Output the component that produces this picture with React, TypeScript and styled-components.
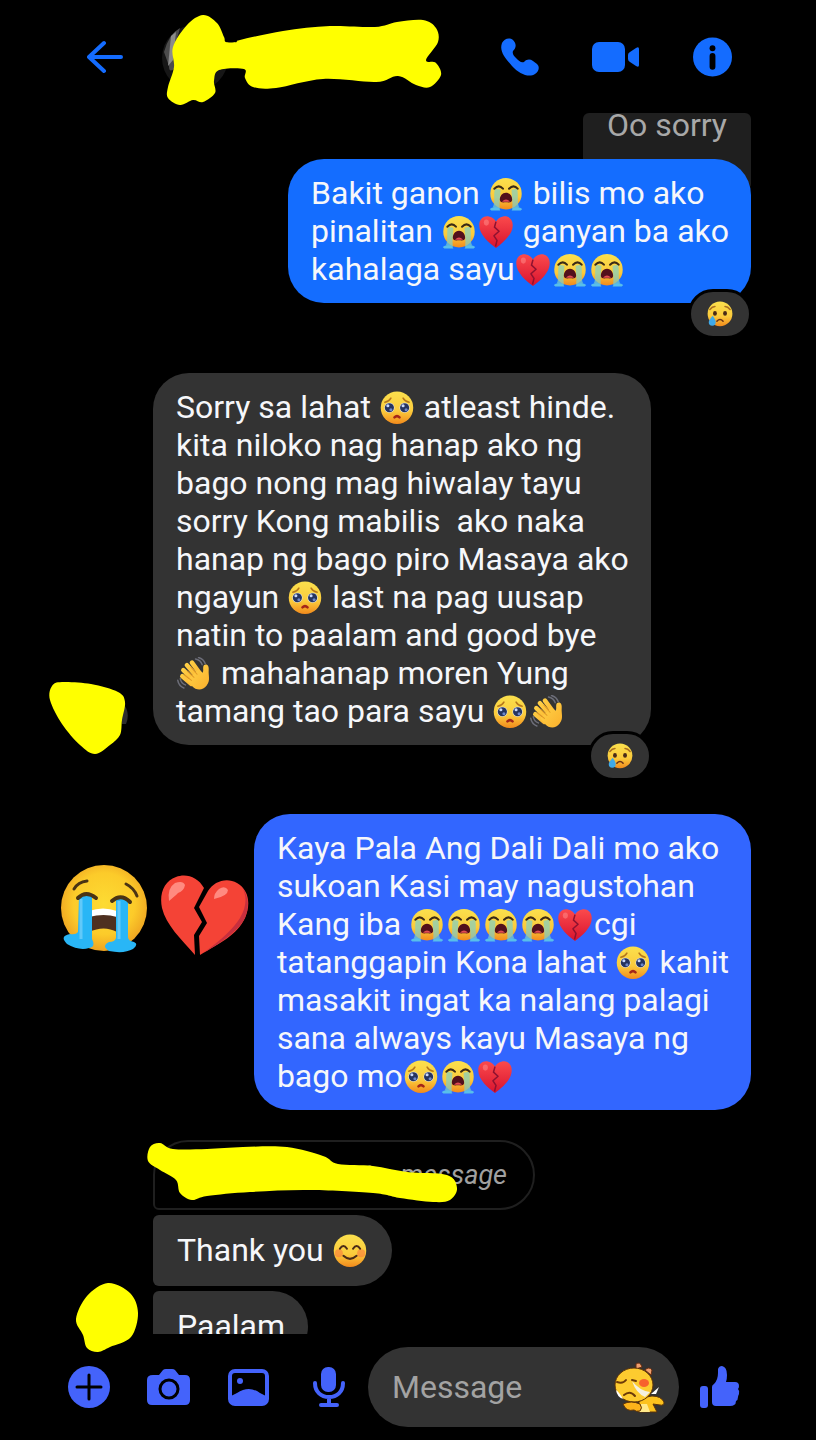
import React from "react";
import styled, { createGlobalStyle } from "styled-components";

const GlobalStyle = createGlobalStyle`
  * { box-sizing: border-box; }
  body { margin: 0; background: #000; font-family: Roboto, "Liberation Sans", sans-serif; }
  button { border: 0; padding: 0; background: none; color: inherit; cursor: pointer; }
  svg { display: block; }
`;

/* ---------- drawing helpers ---------- */

type Point = [number, number];

/** Closed, smooth outline through a list of points. */
function blob(points: Point[]): string {
  const n = points.length;
  let d = `M${points[0][0]} ${points[0][1]}`;
  for (let i = 0; i < n; i++) {
    const a = points[(i - 1 + n) % n];
    const b = points[i];
    const c = points[(i + 1) % n];
    const e = points[(i + 2) % n];
    d += `C${b[0] + (c[0] - a[0]) / 6} ${b[1] + (c[1] - a[1]) / 6} ${c[0] - (e[0] - b[0]) / 6} ${c[1] - (e[1] - b[1]) / 6} ${c[0]} ${c[1]}`;
  }
  return d + "Z";
}

const nameMarker: Point[] = [
  [203, 15], [217, 23], [224, 37], [226, 42], [237, 42], [240, 40], [283, 31], [330, 26], [375, 27],
  [397, 22], [423, 20], [436, 28], [438, 42], [426, 60], [436, 63], [441, 75], [430, 87], [416, 85],
  [398, 76], [376, 82], [323, 79], [276, 88], [253, 87], [245, 78], [244, 69], [219, 70], [214, 81],
  [215, 93], [203, 102], [193, 100], [180, 105], [168, 98], [168, 87], [174, 67], [173, 47], [187, 25],
];
const avatarMarker: Point[] = [
  [62, 682], [91, 684], [118, 692], [125, 702], [122, 720], [120, 735], [110, 745], [95, 754],
  [80, 745], [62, 724], [50, 700], [52, 686],
];
const lastAvatarMarker: Point[] = [
  [108, 1283], [130, 1293], [138, 1313], [131, 1337], [110, 1347], [98, 1352], [87, 1348],
  [83, 1335], [76, 1319], [87, 1296],
];
const unsentMarker: Point[] = [
  [160, 1143], [173, 1149], [207, 1149], [243, 1147], [287, 1147], [323, 1156], [338, 1164],
  [373, 1166], [407, 1172], [447, 1175], [457, 1188], [450, 1200], [433, 1202], [400, 1198],
  [373, 1193], [307, 1190], [250, 1192], [207, 1196], [192, 1200], [180, 1193], [176, 1180],
  [160, 1170], [148, 1161], [150, 1147],
];

const Gradients = () => (
  <HiddenSvg aria-hidden="true">
    <defs>
      <linearGradient id="face" x1="0" y1="0" x2="0" y2="1">
        <stop offset="0" stopColor="#fbe04d" />
        <stop offset="0.6" stopColor="#fbcb3c" />
        <stop offset="1" stopColor="#f28a1c" />
      </linearGradient>
      <radialGradient id="bigFace" cx="0.5" cy="0.45" r="0.55">
        <stop offset="0" stopColor="#fddb33" />
        <stop offset="0.65" stopColor="#fccb2a" />
        <stop offset="1" stopColor="#eea321" />
      </radialGradient>
      <linearGradient id="heart" x1="0" y1="0" x2="0" y2="1">
        <stop offset="0" stopColor="#fb4a4c" />
        <stop offset="1" stopColor="#d8132f" />
      </linearGradient>
      <linearGradient id="hand" x1="0" y1="0" x2="1" y2="1">
        <stop offset="0" stopColor="#ffd54a" />
        <stop offset="1" stopColor="#fbb02c" />
      </linearGradient>
    </defs>
  </HiddenSvg>
);

/* ---------- emoji ---------- */

const emojiArt = {
  sob: {
    label: "loudly crying face",
    art: (
      <>
        <circle cx="33" cy="33" r="31" fill="url(#face)" />
        <path d="M11 23c-3 13 1 26-4 37l14 3c-2-13 1-26 1-38zM55 23c3 13-1 26 4 37l-14 3c2-13-1-26-1-38z" fill="#7fd0c8" opacity=".7" />
        <path d="M1 63q6-6 18-2l3 5H4zM65 63q-6-6-18-2l-3 5h18z" fill="#58bfea" />
        <path d="M10 23q9-9 17 0M39 23q9-9 17 0" fill="none" stroke="#3b2a16" strokeWidth="4" strokeLinecap="round" />
        <path d="M33 31c8 0 13 8 12 15-1 5-5 4-12 4s-11 1-12-4c-1-7 4-15 12-15z" fill="#52101c" />
        <path d="M25 49q8-9 16 0z" fill="#e04b52" />
      </>
    ),
  },
  heart: {
    label: "broken heart",
    art: (
      <>
        <path d="M33 65C20 55 0 39 0 20 0 7 10 1 19 3c7 1 12 6 14 10 2-4 7-9 14-10 9-2 19 4 19 17 0 19-20 35-33 45z" fill="url(#heart)" />
        <path d="M33 13l-3 11 9 8-10 9 6 9-3 12" fill="none" stroke="#8e1230" strokeWidth="3" strokeLinejoin="round" />
        <ellipse cx="14" cy="15" rx="5" ry="6" fill="#ff8f8d" opacity=".5" />
      </>
    ),
  },
  plead: {
    label: "pleading face",
    art: (
      <>
        <circle cx="33" cy="33" r="32" fill="url(#face)" />
        <path d="M9 22q8-1 12-8M57 22q-8-1-12-8" fill="none" stroke="#b5761b" strokeWidth="3" strokeLinecap="round" />
        <circle cx="18" cy="33" r="10" fill="#e3e9f7" />
        <circle cx="48" cy="33" r="10" fill="#e3e9f7" />
        <circle cx="18" cy="33" r="9" fill="#26345f" />
        <circle cx="48" cy="33" r="9" fill="#26345f" />
        <circle cx="15" cy="29" r="3" fill="#c8d8ff" />
        <circle cx="45" cy="29" r="3" fill="#c8d8ff" />
        <circle cx="21" cy="37" r="3" fill="#6d88cc" />
        <circle cx="51" cy="37" r="3" fill="#6d88cc" />
        <path d="M28 52q5-5 10 0" fill="none" stroke="#a42618" strokeWidth="5" strokeLinecap="round" />
      </>
    ),
  },
  wave: {
    label: "waving hand",
    art: (
      <>
        <path d="M36 4q10 2 13 11M42 1q10 3 13 12M1 46q2 11 12 15M6 43q2 9 10 12" stroke="#6c6d78" strokeWidth="3" fill="none" strokeLinecap="round" />
        <path d="M10 38L28 53M12 26L32 45M19 16L38 38M29 11L45 33" stroke="url(#hand)" strokeWidth="9" strokeLinecap="round" fill="none" />
        <path d="M20 46L42 24l8 7c3-3-1-11 3-15 5-4 10 1 9 9-1 12 4 21-4 31-8 11-21 10-29 1z" fill="url(#hand)" />
        <path d="M14 35l14 11M20 28l13 12M27 20l12 14" stroke="#e39a26" strokeWidth="2" fill="none" strokeLinecap="round" />
      </>
    ),
  },
  cry: {
    label: "crying face",
    art: (
      <>
        <circle cx="33" cy="33" r="32" fill="url(#face)" />
        <path d="M7 22q6-8 13-8M59 22q-6-8-13-8" fill="none" stroke="#a96e20" strokeWidth="4" strokeLinecap="round" />
        <ellipse cx="20" cy="32" rx="5" ry="6" fill="#4a2b17" />
        <ellipse cx="46" cy="32" rx="5" ry="6" fill="#4a2b17" />
        <path d="M25 52q8-9 16 0" fill="none" stroke="#6b3216" strokeWidth="4" strokeLinecap="round" />
        <path d="M14 38c5 7 8 11 8 17a9 9 0 0 1-18 0c0-6 5-10 10-17z" fill="#3fa9e8" />
      </>
    ),
  },
  smile: {
    label: "smiling face with smiling eyes",
    art: (
      <>
        <circle cx="33" cy="33" r="32" fill="url(#face)" />
        <circle cx="11" cy="38" r="8" fill="#fa6a3c" opacity=".5" />
        <circle cx="55" cy="38" r="8" fill="#fa6a3c" opacity=".5" />
        <path d="M13 29q7-11 14 0M39 29q7-11 14 0" fill="none" stroke="#4a2b17" strokeWidth="4" strokeLinecap="round" />
        <path d="M20 43q13 12 26 0" fill="none" stroke="#4a2b17" strokeWidth="4" strokeLinecap="round" />
      </>
    ),
  },
};

type EmojiName = keyof typeof emojiArt;

const EmojiSvg = styled.svg`
  display: inline-block;
  width: 34px;
  height: 34px;
  margin: 0 2px 0 1px;
  vertical-align: -7px;
`;

const BadgeSvg = styled.svg`
  width: 26px;
  height: 26px;
`;

const Emoji = ({ name, badge }: { name: EmojiName; badge?: boolean }) => {
  const Svg = badge ? BadgeSvg : EmojiSvg;
  return (
    <Svg viewBox="0 0 66 67" role="img" aria-label={emojiArt[name].label}>
      {emojiArt[name].art}
    </Svg>
  );
};

/* ---------- layout parts ---------- */

const HiddenSvg = styled.svg`
  position: absolute;
  width: 0;
  height: 0;
`;

const Screen = styled.div`
  display: flex;
  flex-direction: column;
  height: 100vh;
  background: #000;
`;

const Header = styled.header`
  flex: none;
  display: flex;
  align-items: center;
  height: 113px;
  padding: 0 84px 0 87px;
  gap: 39px;
  color: #146cff;
`;

const HeaderActions = styled.nav`
  display: flex;
  align-items: center;
  gap: 53px;
  margin-left: auto;
`;

const ThreadFrame = styled.main`
  position: relative;
  flex: 1;
  min-height: 0;
`;

const Thread = styled.div`
  height: 100%;
  overflow: hidden;
  padding: 0 65px 0 48px;
`;

const Row = styled.div<{ $mine?: boolean; $top?: number }>`
  display: flex;
  align-items: flex-end;
  justify-content: ${(p) => (p.$mine ? "flex-end" : "flex-start")};
  margin-top: ${(p) => p.$top ?? 0}px;
`;

const AvatarSlot = styled.div`
  position: relative;
  flex: none;
  width: 105px;
`;

const AvatarCover = styled.svg`
  position: absolute;
  left: 0;
  bottom: -10px;
`;

const LastAvatarCover = styled.svg`
  position: absolute;
  left: 75px;
  bottom: -20px;
`;

const Quoted = styled.p`
  margin: 0;
  height: 77px;
  padding: 0 24px;
  border-radius: 6px;
  background: #1f1f1f;
  color: #a8a8a8;
  font-size: 32px;
  line-height: 24px;
`;

const tones = { sky: "#146dff", indigo: "#3266ff", grey: "#333333" };

const Bubble = styled.div<{ $tone: keyof typeof tones; $stacked?: boolean }>`
  position: relative;
  padding: ${(p) => (p.$stacked ? "16px 23px 17px 24px" : "15px 22px 15px 23px")};
  border-radius: ${(p) => (p.$stacked ? "6px 36px 36px 6px" : "36px")};
  background: ${(p) => tones[p.$tone]};
  color: #f6f7fa;
  font-size: 32px;
  line-height: 38px;
  white-space: pre;
`;

const Line = styled.span`
  display: block;
  height: 38px;
`;

const Reaction = styled.span`
  position: absolute;
  right: -1px;
  bottom: -36px;
  display: flex;
  align-items: center;
  justify-content: center;
  width: 64px;
  height: 50px;
  border: 3px solid #000;
  border-radius: 25px;
  background: #333;
`;

const Stickers = styled.div`
  display: flex;
  align-items: flex-start;
  align-self: flex-start;
  gap: 12px;
  margin: 50px 4px 0 0;
`;

const Unsent = styled.div`
  position: relative;
  display: flex;
  align-items: center;
  justify-content: flex-end;
  width: 382px;
  height: 70px;
  padding: 0 26px;
  border: 2px solid #1f1f1f;
  border-radius: 36px 36px 36px 6px;
  color: #a0a0a0;
  font-size: 27px;
  font-style: italic;
`;

const UnsentCover = styled.svg`
  position: absolute;
  left: -9px;
  top: 0;
`;

const Composer = styled.form`
  position: relative;
  flex: none;
  display: flex;
  align-items: center;
  height: 106px;
  padding: 0 75px 0 67px;
  color: #4463fb;
`;

const Tools = styled.div`
  display: flex;
  gap: 36px;
`;

const Field = styled.div`
  display: flex;
  align-items: center;
  flex: 1;
  min-width: 0;
  height: 80px;
  margin: 0 20px 0 17px;
  padding: 0 14px 0 24px;
  border-radius: 40px;
  background: #333;
`;

const MessageInput = styled.input`
  flex: 1;
  min-width: 0;
  border: 0;
  padding: 0;
  outline: 0;
  background: none;
  color: #fff;
  font: 32px Roboto, "Liberation Sans", sans-serif;
  &::placeholder { color: #a3a3a3; opacity: 1; }
`;

/* ---------- larger drawings ---------- */

const CoveredName = () => (
  <svg width="280" height="98" viewBox="162 8 280 98" role="img" aria-label="Hidden contact name">
    <circle cx="195" cy="58" r="33" fill="#161616" />
    <path d="M164 52q5-18 16-24l-5 18v22q-6 6-6-2z" fill="#4c4c4c" />
    <path d="M171 36l5-4-3 28-5 6z" fill="#8b8b8b" />
    <path d={blob(nameMarker)} fill="#ff0" />
  </svg>
);

const BigSob = () => (
  <svg width="88" height="92" viewBox="0 0 88 92" role="img" aria-label="loudly crying face">
    <circle cx="44" cy="44" r="43" fill="url(#bigFace)" />
    <path d="M14 25q4-7 13-8M77 32q-3-8-11-12" fill="none" stroke="#4a3414" strokeWidth="3" strokeLinecap="round" />
    <path d="M29 48q14-4 28 0v20q-13-7-28 0z" fill="#4e3020" />
    <path d="M29 47q14-5 28 0v6q-13-4-28 0z" fill="#fff" />
    <path d="M19 32q7-4 13 0v43q4 8-3 9-10 3-22-4-8-8 3-10 6 1 8-2z" fill="#29b6f6" />
    <path d="M56 35q6-4 12 0v38q0 4 6 5 5 2-1 7-9 5-24 2-8-5 0-9 6 0 7-4z" fill="#29b6f6" />
    <path d="M21 35v40M59 37v38" stroke="#62c9f9" strokeWidth="3" />
    <path d="M18 34q8-8 18 0M52 37q9-8 18 1" fill="none" stroke="#4a3414" strokeWidth="4" strokeLinecap="round" />
  </svg>
);

const BigHeart = () => (
  <svg width="90" height="92" viewBox="0 0 90 92" role="img" aria-label="broken heart">
    <path d="M44 24C38 13 26 9 16 13 4 17-1 30 2 44c4 17 19 31 33 47l-1-20 8-13-8-14z" fill="#f44336" />
    <path d="M48 27C54 17 67 13 77 19c12 7 14 21 8 35-8 17-25 25-45 37l-1-19 8-13-8-16z" fill="#f44336" />
    <path d="M82 23q8 14-2 31-10 16-37 35 34-19 42-35 7-17-3-31z" fill="#c62f3e" />
    <path d="M9 37q-2-13 6-18 8-3 10 2-1 6-7 8-3 3-9 8zM54 35q0-6 5-10 6-4 9 1 0 6-14 9z" fill="#ff8a80" />
  </svg>
);

const DinoSticker = () => (
  <svg width="52" height="54" viewBox="0 0 52 54" role="img" aria-label="Stickers">
    <path d="M23 9V4q4-3 6 3zM32 10q4-4 7 0l-1 5z" fill="#f0a070" stroke="#6b2f10" />
    <path d="M26 42q4-5 13-6 9 0 12 6 0 4-4 3l-7-1 4 8H25z" fill="#fcc21e" stroke="#5c3208" />
    <path d="M28 44h6l3 8H26z" fill="#ffe98a" />
    <ellipse cx="21" cy="25" rx="19" ry="17" fill="#fdcb2f" stroke="#5c3208" />
    <path d="M3 30q3 2 7 9-6-2-7-9z" fill="#fff" />
    <path d="M19 21q8 10 18 11l-5 5q-9-4-13-16z" fill="#f4f0df" />
    <ellipse cx="31" cy="23" rx="5" ry="4" fill="#f7612d" />
    <path d="M4 22q6 2 9-2M11 35q6-5 11 1M19 20l4 1" fill="none" stroke="#6b3a09" strokeWidth="2" strokeLinecap="round" />
    <path d="M10 44q8-4 17 0 3 4 0 7-4 1-6-1-8 2-11-6z" fill="#fcb31b" stroke="#5c3208" />
    <path d="M38 34l8-7-3 7z" fill="#fff" />
  </svg>
);

export default function App() {
  return (
    <Screen>
      <GlobalStyle />
      <Gradients />
      <Header>
        <button type="button" aria-label="Back">
          <svg width="36" height="34" viewBox="0 0 36 34" fill="none" stroke="currentColor" strokeWidth="4" strokeLinecap="round" strokeLinejoin="round">
            <path d="M17 3L2 17l15 14M2 17h32" />
          </svg>
        </button>
        <CoveredName />
        <HeaderActions aria-label="Call options">
          <button type="button" aria-label="Voice call">
            <svg width="38" height="38" viewBox="0 0 38 38" fill="currentColor">
              <path d="M1 5C3 1 8-1 12 2c4 4 3 8 0 11-1 3 1 5 3 7 3 3 5 5 8 4 3-3 6-3 9-1l4 3c3 3 2 7-2 10-6 4-16 0-23-8C4 20-2 13 1 5z" />
            </svg>
          </button>
          <button type="button" aria-label="Video call">
            <svg width="48" height="32" viewBox="0 0 48 32" fill="currentColor">
              <rect x="0" y="1" width="33" height="30" rx="7" />
              <path d="M47 8v16q0 3-3 1l-6-4q-2-1-2-3v-4q0-2 2-3l6-4q3-2 3 1z" />
            </svg>
          </button>
          <button type="button" aria-label="Conversation details">
            <svg width="39" height="40" viewBox="0 0 40 40">
              <circle cx="20" cy="20" r="20" fill="currentColor" />
              <circle cx="20" cy="11" r="3" fill="#000" />
              <path d="M20 19v11" stroke="#000" strokeWidth="6" strokeLinecap="round" />
            </svg>
          </button>
        </HeaderActions>
      </Header>

      <ThreadFrame>
        <Thread>
          <Row $mine>
            <Quoted>Oo sorry</Quoted>
          </Row>
          <Row $mine $top={-31}>
            <Bubble $tone="sky">
              <Line>Bakit ganon <Emoji name="sob" /> bilis mo ako</Line>
              <Line>pinalitan <Emoji name="sob" /><Emoji name="heart" /> ganyan ba ako</Line>
              <Line>kahalaga sayu<Emoji name="heart" /><Emoji name="sob" /><Emoji name="sob" /></Line>
              <Reaction><Emoji name="cry" badge /></Reaction>
            </Bubble>
          </Row>

          <Row $top={70}>
            <AvatarSlot>
              <AvatarCover width="82" height="74" viewBox="48 681 82 74" role="img" aria-label="Hidden profile photo">
                <path d="M122 702q9 10 4 22h-4z" fill="#2e2e2e" />
                <path d={blob(avatarMarker)} fill="#ff0" />
              </AvatarCover>
            </AvatarSlot>
            <Bubble $tone="grey">
              <Line>Sorry sa lahat <Emoji name="plead" /> atleast hinde.</Line>
              <Line>kita niloko nag hanap ako ng</Line>
              <Line>bago nong mag hiwalay tayu</Line>
              <Line>{"sorry Kong mabilis  ako naka"}</Line>
              <Line>hanap ng bago piro Masaya ako</Line>
              <Line>ngayun <Emoji name="plead" /> last na pag uusap</Line>
              <Line>natin to paalam and good bye</Line>
              <Line><Emoji name="wave" /> mahahanap moren Yung</Line>
              <Line>tamang tao para sayu <Emoji name="plead" /><Emoji name="wave" /></Line>
              <Reaction><Emoji name="cry" badge /></Reaction>
            </Bubble>
          </Row>

          <Row $mine $top={69}>
            <Stickers>
              <BigSob />
              <BigHeart />
            </Stickers>
            <Bubble $tone="indigo">
              <Line>Kaya Pala Ang Dali Dali mo ako</Line>
              <Line>sukoan Kasi may nagustohan</Line>
              <Line>Kang iba <Emoji name="sob" /><Emoji name="sob" /><Emoji name="sob" /><Emoji name="sob" /><Emoji name="heart" />cgi</Line>
              <Line>tatanggapin Kona lahat <Emoji name="plead" /> kahit</Line>
              <Line>masakit ingat ka nalang palagi</Line>
              <Line>sana always kayu Masaya ng</Line>
              <Line>bago mo<Emoji name="plead" /><Emoji name="sob" /><Emoji name="heart" /></Line>
            </Bubble>
          </Row>

          <Row $top={30}>
            <AvatarSlot />
            <Unsent>
              unsent a message
              <UnsentCover width="314" height="62" viewBox="146 1142 314 62" aria-hidden="true">
                <path d={blob(unsentMarker)} fill="#ff0" />
              </UnsentCover>
            </Unsent>
          </Row>
          <Row $top={5}>
            <AvatarSlot />
            <Bubble $tone="grey" $stacked>
              <Line>Thank you <Emoji name="smile" /></Line>
            </Bubble>
          </Row>
          <Row $top={5}>
            <AvatarSlot />
            <Bubble $tone="grey" $stacked>
              <Line>Paalam</Line>
            </Bubble>
          </Row>
        </Thread>
        <LastAvatarCover width="64" height="72" viewBox="75 1282 64 72" role="img" aria-label="Hidden profile photo">
          <path d={blob(lastAvatarMarker)} fill="#ff0" />
        </LastAvatarCover>
      </ThreadFrame>

      <Composer onSubmit={(e) => e.preventDefault()}>
        <Tools>
          <button type="button" aria-label="More actions">
            <svg width="44" height="44" viewBox="0 0 44 44">
              <circle cx="22" cy="22" r="21" fill="currentColor" />
              <path d="M22 10v24M10 22h24" stroke="#000" strokeWidth="3" strokeLinecap="round" />
            </svg>
          </button>
          <button type="button" aria-label="Camera">
            <svg width="44" height="44" viewBox="0 0 44 44">
              <path d="M6 10h6l4-5q1-1 3-1h6q2 0 3 1l4 5h6q5 0 5 5v20q0 5-5 5H5q-5 0-5-5V15q0-5 6-5z" fill="currentColor" />
              <circle cx="22" cy="24" r="9" fill="currentColor" stroke="#000" strokeWidth="3" />
            </svg>
          </button>
          <button type="button" aria-label="Photos">
            <svg width="44" height="44" viewBox="0 0 44 44">
              <rect x="3" y="6" width="37" height="33" rx="5" fill="none" stroke="currentColor" strokeWidth="4" />
              <circle cx="13" cy="16" r="3" fill="currentColor" />
              <path d="M4 31l6-3q12-8 23 0l6 3v7H4z" fill="currentColor" />
            </svg>
          </button>
          <button type="button" aria-label="Voice message">
            <svg width="44" height="44" viewBox="0 0 44 44">
              <rect x="14" y="2" width="15" height="25" rx="7" fill="currentColor" />
              <path d="M8 18c0 9 6 14 14 14s14-5 14-14M22 32v7M14 40h16" fill="none" stroke="currentColor" strokeWidth="4" strokeLinecap="round" />
            </svg>
          </button>
        </Tools>
        <Field>
          <MessageInput type="text" aria-label="Message" placeholder="Message" />
          <button type="button" aria-label="Open stickers">
            <DinoSticker />
          </button>
        </Field>
        <button type="button" aria-label="Send a like">
          <svg width="42" height="44" viewBox="0 0 42 44" fill="currentColor">
            <rect x="1" y="21" width="8" height="22" rx="3" />
            <path d="M13 22q0-2 2-3 4-4 4-11V4q1-3 4-3 5 1 5 9 0 4-1 7h9q4 0 4 4 0 2-1 3 2 2 1 5-1 2-1 3 0 3-2 4 0 3-2 4-1 1-4 1H17q-4 0-4-4z" />
          </svg>
        </button>
      </Composer>
    </Screen>
  );
}
